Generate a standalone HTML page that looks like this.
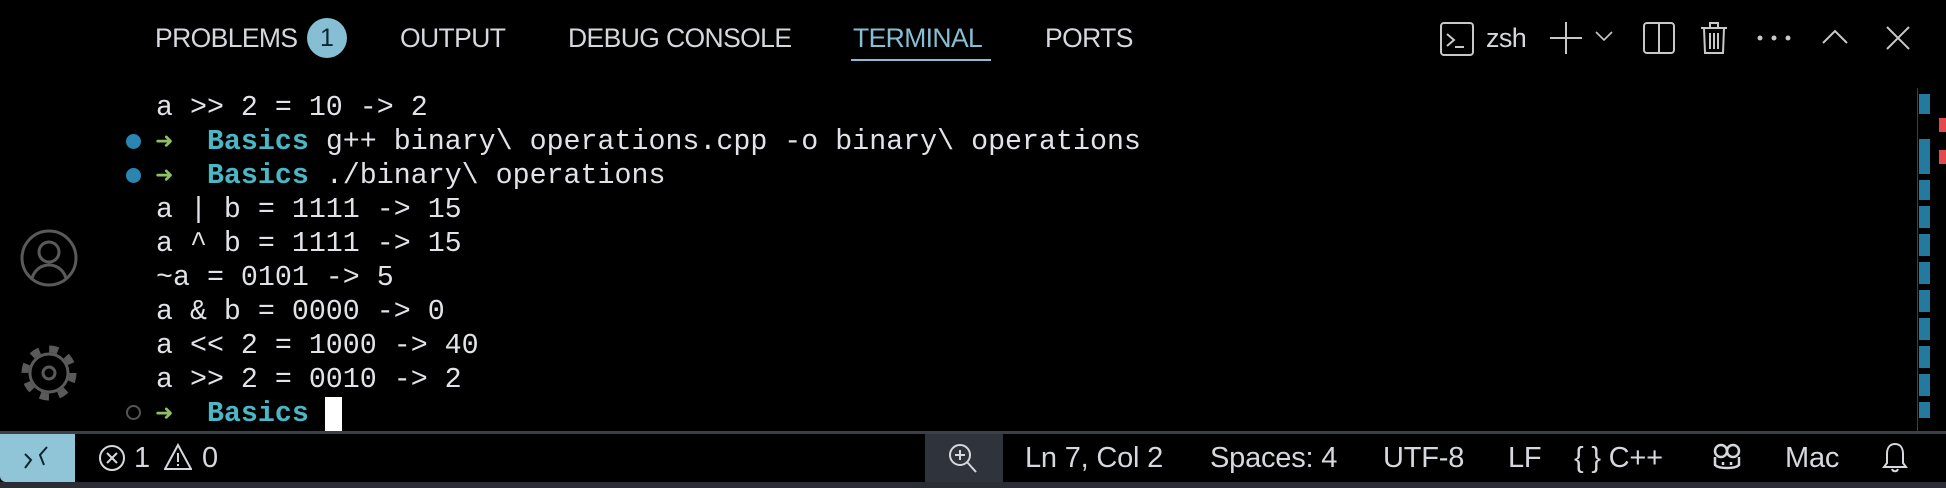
<!DOCTYPE html>
<html><head><style>
*{margin:0;padding:0;box-sizing:border-box}
body{width:1946px;height:488px;background:#000;position:relative;overflow:hidden;font-family:"Liberation Sans",sans-serif;color:#cfd2d8}
.tab{position:absolute;top:23px;font-size:26.5px;color:#d6d8dd;letter-spacing:-0.6px}
.t{position:absolute;left:156px;font-family:"Liberation Mono",monospace;font-size:28.3px;color:#e2e3e8;white-space:pre;line-height:34px}
.b{color:#4bb6c4;font-weight:bold}
.ar{position:absolute;left:155px;color:#8fc163;font-family:"DejaVu Sans",sans-serif;font-size:22px;line-height:34px}
.dot{position:absolute;left:126px;width:15px;height:15px;border-radius:50%;background:#2a86b0}
.s{position:absolute;top:442px;font-size:29px;color:#d6d8dd;letter-spacing:-0.2px}
svg{position:absolute}
.bm{position:absolute;left:1919px;width:11px;background:#24799f}
</style></head><body>
<div class="tab" style="left:155px">PROBLEMS</div>
<div style="position:absolute;left:307px;top:18px;width:40px;height:40px;border-radius:50%;background:#86bfd3;color:#0b2630;font-size:25px;text-align:center;line-height:40px">1</div>
<div class="tab" style="left:400px">OUTPUT</div>
<div class="tab" style="left:568px">DEBUG CONSOLE</div>
<div class="tab" style="left:853px;color:#86bfd3">TERMINAL</div>
<div style="position:absolute;left:851px;top:59px;width:140px;height:2px;background:#86bfd3"></div>
<div class="tab" style="left:1045px">PORTS</div>

<svg style="left:1440px;top:22px" width="34" height="34" viewBox="0 0 34 34" fill="none" stroke="#c8c8c8" stroke-width="2"><rect x="1" y="1" width="32" height="32" rx="3"/><path d="M7 12l7 6-7 6M15 25h9"/></svg>
<div class="tab" style="left:1486px;font-size:27px">zsh</div>
<svg style="left:1550px;top:22px" width="32" height="32" stroke="#c8c8c8" stroke-width="2"><path d="M16 0v32M0 16h32"/></svg>
<svg style="left:1595px;top:30px" width="18" height="12" stroke="#c8c8c8" stroke-width="1.6" fill="none"><path d="M1 2l8 8 8-8"/></svg>
<svg style="left:1643px;top:22px" width="32" height="32" fill="none" stroke="#c8c8c8" stroke-width="2"><rect x="1" y="1" width="30" height="30" rx="3"/><path d="M16 1v30"/></svg>
<svg style="left:1700px;top:21px" width="28" height="34" fill="none" stroke="#c8c8c8" stroke-width="2"><path d="M1 7h26M10 7V2h8v5M4 7l1 25h18l1-25M10 12v16M14 12v16M18 12v16"/></svg>
<svg style="left:1757px;top:35px" width="36" height="6" fill="#c8c8c8"><circle cx="3" cy="3" r="2.5"/><circle cx="17" cy="3" r="2.5"/><circle cx="31" cy="3" r="2.5"/></svg>
<svg style="left:1822px;top:28px" width="26" height="16" fill="none" stroke="#c8c8c8" stroke-width="2"><path d="M1 15L13 3l12 12"/></svg>
<svg style="left:1886px;top:26px" width="24" height="24" stroke="#c8c8c8" stroke-width="2"><path d="M1 1l22 22M23 1L1 23"/></svg>

<div class="t" style="top:91px">a &gt;&gt; 2 = 10 -&gt; 2</div>
<div class="dot" style="top:134px"></div><div class="ar" style="top:125px">➜</div>
<div class="t" style="top:125px">   <span class="b">Basics</span> g++ binary\ operations.cpp -o binary\ operations</div>
<div class="dot" style="top:168px"></div><div class="ar" style="top:159px">➜</div>
<div class="t" style="top:159px">   <span class="b">Basics</span> ./binary\ operations</div>
<div class="t" style="top:193px">a | b = 1111 -&gt; 15</div>
<div class="t" style="top:227px">a ^ b = 1111 -&gt; 15</div>
<div class="t" style="top:261px">~a = 0101 -&gt; 5</div>
<div class="t" style="top:295px">a &amp; b = 0000 -&gt; 0</div>
<div class="t" style="top:329px">a &lt;&lt; 2 = 1000 -&gt; 40</div>
<div class="t" style="top:363px">a &gt;&gt; 2 = 0010 -&gt; 2</div>
<div style="position:absolute;left:126px;top:405px;width:15px;height:15px;border-radius:50%;border:2.5px solid #555"></div>
<div class="ar" style="top:397px">➜</div>
<div class="t" style="top:397px">   <span class="b">Basics</span></div>
<div style="position:absolute;left:325px;top:397px;width:17px;height:34px;background:#fff"></div>

<svg style="left:20px;top:229px" width="58" height="58" fill="none" stroke="#5a5a5a" stroke-width="3"><circle cx="29" cy="29" r="27"/><circle cx="29" cy="23" r="10"/><path d="M12 49c3-9 10-13 17-13s14 4 17 13"/></svg>
<svg style="left:20px;top:344px" width="58" height="58" fill="none" stroke="#5a5a5a"><circle cx="29" cy="29" r="24" stroke-width="7" stroke-dasharray="9 9.85"/><circle cx="29" cy="29" r="19" stroke-width="3"/><circle cx="29" cy="29" r="6" stroke-width="3"/></svg>

<div style="position:absolute;left:1917px;top:88px;width:1px;height:344px;background:#3a3f48"></div>
<div class="bm" style="top:94px;height:20px"></div>
<div class="bm" style="top:139px;height:35px"></div>
<div class="bm" style="top:180px;height:20px"></div>
<div class="bm" style="top:206px;height:22px"></div>
<div class="bm" style="top:234px;height:22px"></div>
<div class="bm" style="top:262px;height:22px"></div>
<div class="bm" style="top:290px;height:22px"></div>
<div class="bm" style="top:318px;height:22px"></div>
<div class="bm" style="top:346px;height:22px"></div>
<div class="bm" style="top:374px;height:22px"></div>
<div class="bm" style="top:402px;height:16px"></div>
<div style="position:absolute;left:1939px;top:118px;width:7px;height:14px;background:#e5484d"></div>
<div style="position:absolute;left:1939px;top:150px;width:7px;height:14px;background:#e5484d"></div>

<div style="position:absolute;left:0;top:431px;width:1946px;height:3px;background:#3b3f47"></div>
<div style="position:absolute;left:0;top:482px;width:1946px;height:6px;background:#2a2d33"></div>
<div style="position:absolute;left:0;top:434px;width:75px;height:48px;background:#8fc5d6;border-bottom-left-radius:6px"></div>
<svg style="left:22px;top:444px" width="28" height="28" fill="none" stroke="#0b2630" stroke-width="2"><path d="M3 10l6 6-6 8M25 3l-7 8 4 10"/></svg>
<svg style="left:98px;top:444px" width="28" height="28" fill="none" stroke="#d6d8dd" stroke-width="2"><circle cx="14" cy="14" r="12"/><path d="M9 9l10 10M19 9L9 19"/></svg>
<div class="s" style="left:134px">1</div>
<svg style="left:164px;top:443px" width="28" height="28" fill="none" stroke="#d6d8dd" stroke-width="2"><path d="M14 2L1 26h26z M14 10v9 M14 21v2"/></svg>
<div class="s" style="left:202px">0</div>
<div style="position:absolute;left:925px;top:434px;width:78px;height:48px;background:#2f333b"></div>
<svg style="left:948px;top:443px" width="30" height="30" fill="none" stroke="#d6d8dd" stroke-width="2"><circle cx="12" cy="12" r="10"/><path d="M12 7v10M7 12h10M19 19l9 10"/></svg>
<div class="s" style="left:1025px">Ln 7, Col 2</div>
<div class="s" style="left:1210px">Spaces: 4</div>
<div class="s" style="left:1383px">UTF-8</div>
<div class="s" style="left:1508px">LF</div>
<div class="s" style="left:1574px">{ } C++</div>
<svg style="left:1712px;top:443px" width="30" height="28" fill="none" stroke="#d6d8dd" stroke-width="2.5"><circle cx="9" cy="8" r="6"/><circle cx="21" cy="8" r="6"/><path d="M3 14v8c4 4 20 4 24 0v-8"/><path d="M11 19v3M19 19v3"/></svg>
<div class="s" style="left:1785px">Mac</div>
<svg style="left:1882px;top:442px" width="26" height="32" fill="none" stroke="#d6d8dd" stroke-width="2"><path d="M13 2c-6 0-8 5-8 10v9l-3 4h22l-3-4v-9c0-5-2-10-8-10zM10 27c1 3 5 3 6 0"/></svg>
</body></html>
